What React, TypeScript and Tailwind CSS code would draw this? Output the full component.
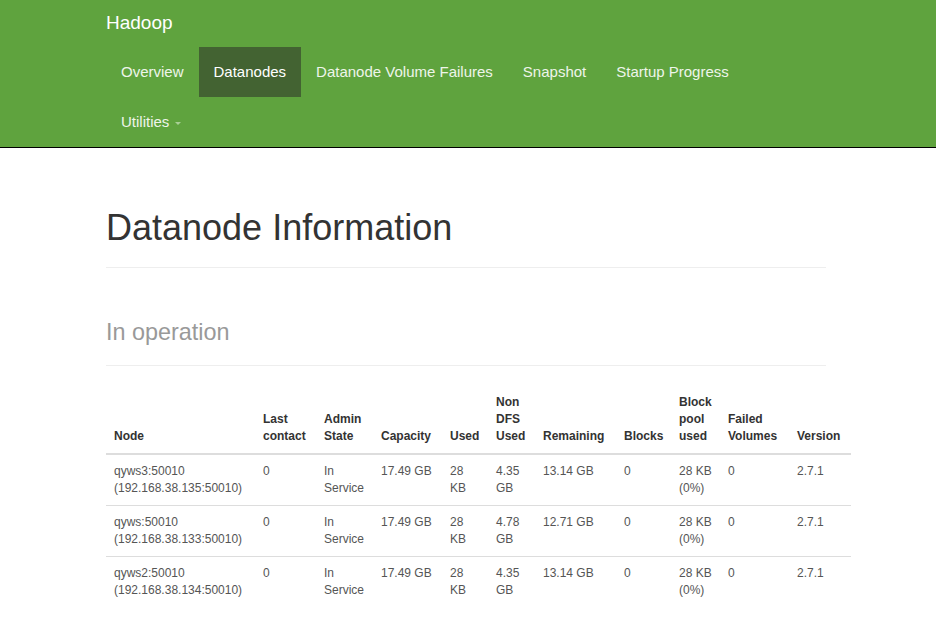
import React from "react";

const navItems = ["Overview", "Datanodes", "Datanode Volume Failures", "Snapshot", "Startup Progress"];

type Row = {
  node: string;
  addr: string;
  nonDfs: string;
  remaining: string;
};

const rows: Row[] = [
  { node: "qyws3:50010", addr: "(192.168.38.135:50010)", nonDfs: "4.35", remaining: "13.14 GB" },
  { node: "qyws:50010", addr: "(192.168.38.133:50010)", nonDfs: "4.78", remaining: "12.71 GB" },
  { node: "qyws2:50010", addr: "(192.168.38.134:50010)", nonDfs: "4.35", remaining: "13.14 GB" },
];

const cols = [149, 61, 57, 69, 46, 47, 81, 55, 49, 69, 62];

const headers: string[][] = [
  ["Node"],
  ["Last", "contact"],
  ["Admin", "State"],
  ["Capacity"],
  ["Used"],
  ["Non", "DFS", "Used"],
  ["Remaining"],
  ["Blocks"],
  ["Block", "pool", "used"],
  ["Failed", "Volumes"],
  ["Version"],
];

export default function App() {
  return (
    <div className="min-h-screen bg-white font-['Liberation_Sans',Arial,sans-serif] text-[#333]">
      {/* barre de navigation */}
      <div className="bg-[#5fa33e] border-b border-black">
        <div className="ml-[91px] w-[750px] px-[15px]">
          <div className="h-[47px] flex items-center text-[19px] text-white">Hadoop</div>
          <ul className="flex flex-wrap text-[15px] leading-[20px]">
            {navItems.map((item) => (
              <li key={item}>
                <a
                  className={
                    item === "Datanodes"
                      ? "block px-[15px] py-[15px] bg-[#436332] text-white"
                      : "block px-[15px] py-[15px] text-[#eef5ea]"
                  }
                >
                  {item}
                </a>
              </li>
            ))}
            <li>
              <a className="flex items-center px-[15px] py-[15px] text-[#eef5ea]">
                Utilities
                <span className="ml-[6px] mt-[2px] border-x-[3px] border-t-[3px] border-x-transparent border-t-[#a9cf96]" />
              </a>
            </li>
          </ul>
        </div>
      </div>

      <div className="ml-[91px] w-[750px] px-[15px]">
        <div className="mt-[60px] pb-[9px] mb-[20px] border-b border-[#eee]">
          <h1 className="text-[36px] leading-[39.6px] mb-[10px] text-[#333]">Datanode Information</h1>
        </div>

        <div className="mt-[40px] pb-[9px] mb-[20px] border-b border-[#eee]">
          <h1 className="text-[36px] leading-[39.6px] mb-[4px]">
            <small className="text-[23.4px] text-[#999]">In operation</small>
          </h1>
        </div>

        <table className="table-fixed border-collapse w-[745px] text-[12px] leading-[17px]">
          <colgroup>
            {cols.map((w, i) => (
              <col key={i} style={{ width: w }} />
            ))}
          </colgroup>
          <thead>
            <tr>
              {headers.map((h, i) => (
                <th key={i} className="p-[8px] text-left align-bottom font-bold text-[#333] border-b-2 border-[#ddd] whitespace-nowrap">
                  {h.map((l, j) => (
                    <div key={j}>{l}</div>
                  ))}
                </th>
              ))}
            </tr>
          </thead>
          <tbody className="text-[#555]">
            {rows.map((r) => (
              <tr key={r.node} className="border-t border-[#ddd]">
                <Cell lines={[r.node, r.addr]} />
                <Cell lines={["0"]} />
                <Cell lines={["In", "Service"]} />
                <Cell lines={["17.49 GB"]} />
                <Cell lines={["28", "KB"]} />
                <Cell lines={[r.nonDfs, "GB"]} />
                <Cell lines={[r.remaining]} />
                <Cell lines={["0"]} />
                <Cell lines={["28 KB", "(0%)"]} />
                <Cell lines={["0"]} />
                <Cell lines={["2.7.1"]} />
              </tr>
            ))}
          </tbody>
        </table>
      </div>
    </div>
  );
}

function Cell({ lines }: { lines: string[] }) {
  return (
    <td className="p-[8px] align-top whitespace-nowrap border-t border-[#ddd]">
      {lines.map((l, i) => (
        <div key={i}>{l}</div>
      ))}
    </td>
  );
}
